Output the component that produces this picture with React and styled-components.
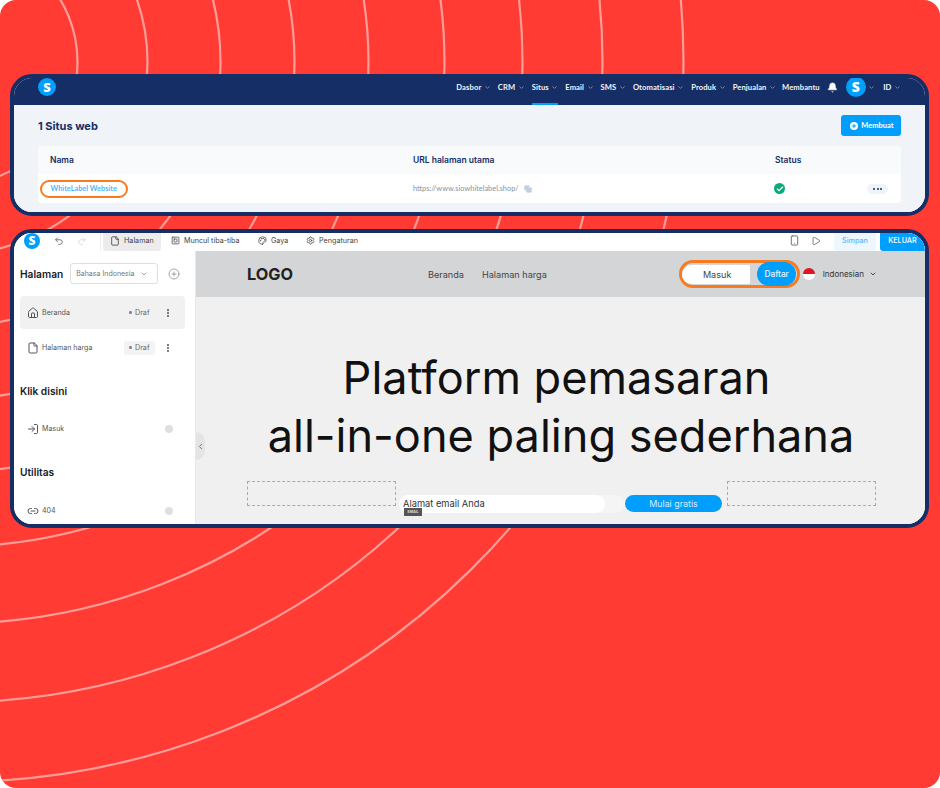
import React from 'react'
import styled, { createGlobalStyle } from 'styled-components'
import {
  Bell,
  Check,
  ChevronDown,
  ChevronLeft,
  CirclePlus,
  Copy,
  EllipsisVertical,
  File,
  House,
  Link2,
  LogIn,
  Palette,
  Play,
  Plus,
  Redo2,
  Settings,
  Smartphone,
  SquareSquare,
  Undo2,
} from 'lucide-react'

const navy = '#152e66'
const blue = '#009ffd'
const orange = '#f97a1f'

const GlobalStyle = createGlobalStyle`
  html, body {
    margin: 0;
    padding: 0;
    background: #fff;
  }
  * {
    box-sizing: border-box;
  }
  body {
    font-family: Inter, "Liberation Sans", sans-serif;
  }
`

const Page = styled.div`
  position: relative;
  width: 940px;
  height: 788px;
  padding: 74px 11px 0 10px;
  background: #ff3b33;
  border-radius: 16px;
  overflow: hidden;
  display: flex;
  flex-direction: column;
  gap: 13px;
`

const Waves = styled.svg`
  position: absolute;
  top: 0;
  left: 0;
`

const Card = styled.section`
  position: relative;
  height: ${({ $height }) => $height}px;
  flex: none;
  border: 4px solid ${navy};
  border-radius: 22px;
  overflow: hidden;
  background: #fff;
  display: flex;
  flex-direction: column;
`

/* top card: dashboard */
const TopBar = styled.header`
  height: 27px;
  flex: none;
  background: ${navy};
  display: flex;
  align-items: center;
  padding: 0 24px 9px 24px;
  font-family: Lato, sans-serif;
`

const Logo = styled.span`
  width: ${({ $size }) => $size}px;
  height: ${({ $size }) => $size}px;
  flex: none;
  border-radius: 50%;
  background: ${blue};
  color: #fff;
  font-family: "Open Sans", sans-serif;
  font-weight: 800;
  font-size: ${({ $size }) => Math.round($size * 0.72)}px;
  line-height: 1;
  display: flex;
  align-items: center;
  justify-content: center;
`

const MainNav = styled.nav`
  margin-left: auto;
  display: flex;
  align-items: center;
  height: 100%;
`

const NavItem = styled.span`
  position: relative;
  height: 100%;
  display: flex;
  align-items: center;
  margin-left: ${({ $gap }) => $gap ?? 0}px;
  color: #f2f5fa;
  font-size: 7.6px;
  font-weight: 700;
  letter-spacing: 0.1px;
  white-space: nowrap;
  svg {
    margin-left: 2.5px;
    opacity: 0.75;
  }
  ${({ $active }) =>
    $active &&
    `
    &::after {
      content: '';
      position: absolute;
      left: 0;
      right: 0;
      bottom: -9px;
      height: 2px;
      background: ${blue};
    }
  `}
`

const BellItem = styled(NavItem)`
  svg {
    margin-left: 0;
    opacity: 1;
  }
`

const Dash = styled.div`
  flex: 1;
  background: #f0f3f8;
  padding: 10px 24px 0;
`

const TitleRow = styled.div`
  display: flex;
  align-items: center;
  justify-content: space-between;
  height: 21px;
`

const Title = styled.h2`
  margin: 0;
  color: ${navy};
  font-size: 11px;
  font-weight: 700;
`

const CreateButton = styled.button`
  width: 60px;
  height: 21px;
  border: 0;
  border-radius: 3px;
  background: ${blue};
  color: #fff;
  font-family: Lato, sans-serif;
  font-size: 7.5px;
  font-weight: 700;
  padding: 0 0 0 2px;
  display: flex;
  align-items: center;
  justify-content: center;
  gap: 3px;
`

const PlusDot = styled.span`
  width: 8px;
  height: 8px;
  border-radius: 50%;
  background: #fff;
  color: ${blue};
  display: flex;
  align-items: center;
  justify-content: center;
`

const Table = styled.div`
  margin-top: 10px;
  border-radius: 4px;
  overflow: hidden;
`

const TableRow = styled.div`
  display: grid;
  grid-template-columns: 363px 362px 1fr;
  align-items: center;
  padding-left: 12px;
  height: ${({ $height }) => $height}px;
  background: ${({ $head }) => ($head ? '#f8fafc' : '#fff')};
`

const HeadCell = styled.span`
  color: ${navy};
  font-size: 8.5px;
  font-weight: 600;
`

const NameOutline = styled.span`
  justify-self: start;
  margin-left: -10.5px;
  width: 88px;
  height: 18px;
  border: 2.2px solid ${orange};
  border-radius: 9px;
  color: #45adff;
  font-family: Lato, sans-serif;
  font-size: 7.4px;
  font-weight: 600;
  display: flex;
  align-items: center;
  padding-left: 9px;
  white-space: nowrap;
`

const UrlCell = styled.span`
  color: #8b93a1;
  font-family: Lato, sans-serif;
  font-size: 7.4px;
  display: flex;
  align-items: center;
  gap: 5px;
  svg {
    color: #c4cedd;
  }
`

const StatusCell = styled.div`
  display: flex;
  align-items: center;
  justify-content: space-between;
  padding: 0 13px 0 0;
`

const StatusDot = styled.span`
  width: 11px;
  height: 11px;
  margin-left: -1px;
  border-radius: 50%;
  background: #11a67b;
  color: #fff;
  display: flex;
  align-items: center;
  justify-content: center;
`

const MoreButton = styled.span`
  width: 21px;
  height: 10px;
  border-radius: 5px;
  background: #f0f3f8;
  display: flex;
  align-items: center;
  justify-content: center;
  gap: 1.5px;
  i {
    width: 2px;
    height: 2px;
    border-radius: 50%;
    background: ${navy};
  }
`

/* bottom card: page builder */
const Toolbar = styled.header`
  height: 18px;
  flex: none;
  display: flex;
  align-items: center;
  padding-left: 10px;
  color: #444;
  font-size: 7.2px;
  background: #fff;
`

const ToolLogo = styled(Logo)`
  margin-top: -3px;
`

const ToolIcon = styled.span`
  display: flex;
  margin-top: -3px;
  margin-left: ${({ $gap }) => $gap ?? 0}px;
  color: ${({ $muted }) => ($muted ? '#d6d6d6' : '#666')};
`

const ToolDivider = styled.span`
  width: 1px;
  height: 100%;
  margin: 0 2px 0 13px;
  background: #eee;
`

const ToolTab = styled.span`
  height: 100%;
  width: ${({ $width }) => $width}px;
  padding: 0 0 3px ${({ $pad }) => $pad ?? 0}px;
  border-radius: 0 0 3px 3px;
  background: ${({ $active }) => ($active ? '#ececec' : 'transparent')};
  display: flex;
  align-items: center;
  gap: 4px;
  white-space: nowrap;
`

const ToolRight = styled.div`
  margin-left: auto;
  height: 100%;
  display: flex;
  align-items: center;
`

const SaveButton = styled.span`
  width: 42px;
  height: 100%;
  margin: 0 4px 0 13px;
  padding-bottom: 3px;
  border-radius: 0 0 3px 3px;
  background: #eef6fe;
  color: #58b6fc;
  font-weight: 500;
  display: flex;
  align-items: center;
  justify-content: center;
`

const ExitButton = styled.span`
  width: 45px;
  height: 100%;
  padding-bottom: 3px;
  border-radius: 0 0 0 3px;
  background: ${blue};
  color: #e9f6ff;
  font-weight: 600;
  display: flex;
  align-items: center;
  justify-content: center;
`

const Workspace = styled.div`
  flex: 1;
  min-height: 0;
  display: flex;
`

const Sidebar = styled.aside`
  width: 182px;
  flex: none;
  padding: 12px 0 0 6px;
  background: #fff;
  border-right: 1px solid #e9e9e9;
`

const SideHead = styled.div`
  display: flex;
  align-items: center;
  height: 21px;
`

const SideTitle = styled.h3`
  margin: ${({ $top }) => $top ?? 0}px 0 0;
  color: #1b1b1f;
  font-size: 10.2px;
  font-weight: 600;
  line-height: 14px;
`

const LangSelect = styled.div`
  width: 88px;
  height: 21px;
  margin-left: 7px;
  padding: 0 9px 0 5px;
  border: 1px solid #dedede;
  border-radius: 3px;
  color: #777;
  font-size: 7px;
  display: flex;
  align-items: center;
  justify-content: space-between;
  white-space: nowrap;
`

const AddPage = styled.span`
  display: flex;
  margin-left: 10px;
  color: #777;
`

const PageRow = styled.div`
  width: 165px;
  height: ${({ $height }) => $height ?? 33}px;
  margin-top: ${({ $top }) => $top ?? 0}px;
  padding: 0 12px 0 7px;
  border-radius: 4px;
  background: ${({ $active }) => ($active ? '#f1f1f1' : 'transparent')};
  color: #555;
  font-size: 7.1px;
  display: flex;
  align-items: center;
  svg {
    flex: none;
    color: #555;
  }
`

const PageName = styled.span`
  margin-left: 3px;
  margin-right: auto;
`

const DraftChip = styled.span`
  width: 31px;
  height: 14px;
  margin-right: 8px;
  border-radius: 3px;
  background: ${({ $filled }) => ($filled ? '#f3f3f3' : 'transparent')};
  color: #666;
  font-size: 7.2px;
  display: flex;
  align-items: center;
  justify-content: center;
  gap: 3px;
  &::before {
    content: '';
    width: 2.5px;
    height: 2.5px;
    border-radius: 50%;
    background: #888;
  }
`

const HelpDot = styled.span`
  width: 8px;
  height: 8px;
  border-radius: 50%;
  background: #dfdfdf;
`

const Preview = styled.main`
  position: relative;
  flex: 1;
  min-width: 0;
  background: #f0f0f0;
  overflow: hidden;
`

const CollapseTab = styled.span`
  position: absolute;
  top: 181px;
  left: 0;
  width: 9px;
  height: 28px;
  border-radius: 0 9px 9px 0;
  background: #e4e4e4;
  color: #555;
  display: flex;
  align-items: center;
`

const SiteHeader = styled.header`
  height: 46px;
  padding: 0 48px 0 51px;
  background: #d4d5d7;
  display: flex;
  align-items: center;
`

const SiteLogo = styled.span`
  width: 181px;
  color: #222;
  font-size: 16.3px;
  font-weight: 700;
`

const SiteLinks = styled.nav`
  display: flex;
  gap: 18px;
  color: #444;
  font-size: 9.15px;
`

const AuthGroup = styled.div`
  position: relative;
  margin-left: auto;
  width: 121px;
  height: 28px;
  padding: 1.5px 2.5px;
  border: 3px solid ${orange};
  border-radius: 14px;
  display: flex;
  align-items: center;
  justify-content: space-between;
`

const LoginButton = styled.span`
  width: 68px;
  height: 100%;
  margin: 0 0 0 -2px;
  border-radius: 11px 2px 2px 11px;
  background: #fff;
  color: #444;
  font-size: 9.1px;
  padding-left: 2px;
  display: flex;
  align-items: center;
  justify-content: center;
`

const SignupButton = styled.span`
  width: 39px;
  height: 24px;
  margin-right: -2px;
  border-radius: 12px;
  background: ${blue};
  color: #e6f5ff;
  font-size: 8.3px;
  font-weight: 500;
  display: flex;
  align-items: center;
  justify-content: center;
`

const Flag = styled.span`
  width: 12px;
  height: 12px;
  margin: 0 8px 0 3px;
  border-radius: 50%;
  background: linear-gradient(#e2141f 50%, #fff 50%);
`

const LangLabel = styled.span`
  color: #333;
  font-size: 8px;
  display: flex;
  align-items: center;
  gap: 5px;
`

const Hero = styled.h1`
  margin: 0;
  padding: 52px 0 0 1px;
  color: #111;
  font-size: 45.1px;
  font-weight: 400;
  line-height: 58px;
  text-align: center;
  white-space: nowrap;
`

const HeroLead = styled.span`
  display: inline-block;
  padding-right: 9px;
`

const SignupForm = styled.div`
  margin-top: 16px;
  padding-left: 51px;
  display: flex;
  align-items: flex-start;
`

const Placeholder = styled.div`
  width: 149px;
  height: 25px;
  border: 1px dashed #aaa;
`

const EmailWrap = styled.div`
  position: relative;
  width: 206px;
  height: 18px;
  margin: 14px 0 0 3px;
  padding-left: 4px;
  border-radius: 9px;
  background: #fff;
  box-shadow: 20px 0 0 #f5f5f5;
  color: #333;
  font-size: 9.3px;
  line-height: 17px;
`

const FieldTag = styled.span`
  position: absolute;
  top: 13px;
  left: 5px;
  width: 18px;
  height: 8px;
  background: #555;
  color: #ddd;
  font-size: 3.5px;
  font-weight: 700;
  line-height: 8px;
  text-align: center;
`

const StartButton = styled.div`
  width: 97px;
  height: 17px;
  margin: 14px 5px 0 20px;
  border-radius: 9px;
  background: ${blue};
  color: #d6efff;
  font-size: 8.9px;
  line-height: 17px;
  text-align: center;
`

const radii = [125, 195, 268, 342, 416, 492, 570, 650, 731]

const navItems = ['Dasbor', 'CRM', 'Situs', 'Email', 'SMS', 'Otomatisasi', 'Produk', 'Penjualan']

export default function App() {
  return (
    <>
      <GlobalStyle />
      <Page>
        <Waves width="940" height="788" aria-hidden="true">
          {radii.map((r) => (
            <ellipse
              key={r}
              cx="-47.5"
              cy="62"
              rx={r}
              ry={r * 0.985}
              fill="none"
              stroke="#ffffff"
              strokeOpacity="0.5"
              strokeWidth="2.2"
            />
          ))}
        </Waves>

        <Card $height={142}>
          <TopBar>
            <Logo $size={18}>S</Logo>
            <MainNav>
              {navItems.map((label, i) => (
                <NavItem key={label} $gap={i === 0 ? 0 : 7} $active={label === 'Situs'}>
                  {label}
                  <ChevronDown size={7} strokeWidth={2} />
                </NavItem>
              ))}
              <NavItem $gap={6}>Membantu</NavItem>
              <BellItem $gap={7}>
                <Bell size={11} fill="#fff" strokeWidth={1.5} />
              </BellItem>
              <NavItem $gap={8}>
                <Logo $size={20}>S</Logo>
                <ChevronDown size={7} strokeWidth={2} />
              </NavItem>
              <NavItem $gap={8}>
                ID
                <ChevronDown size={7} strokeWidth={2} />
              </NavItem>
            </MainNav>
          </TopBar>
          <Dash>
            <TitleRow>
              <Title>1 Situs web</Title>
              <CreateButton>
                <PlusDot>
                  <Plus size={6} strokeWidth={4} />
                </PlusDot>
                Membuat
              </CreateButton>
            </TitleRow>
            <Table>
              <TableRow $head $height={28}>
                <HeadCell>Nama</HeadCell>
                <HeadCell>URL halaman utama</HeadCell>
                <HeadCell>Status</HeadCell>
              </TableRow>
              <TableRow $height={29}>
                <NameOutline>WhiteLabel Website</NameOutline>
                <UrlCell>
                  https://www.siowhitelabel.shop/
                  <Copy size={8} fill="#c4cedd" />
                </UrlCell>
                <StatusCell>
                  <StatusDot>
                    <Check size={8} strokeWidth={3.5} />
                  </StatusDot>
                  <MoreButton>
                    <i />
                    <i />
                    <i />
                  </MoreButton>
                </StatusCell>
              </TableRow>
            </Table>
          </Dash>
        </Card>

        <Card $height={299}>
          <Toolbar>
            <ToolLogo $size={16}>S</ToolLogo>
            <ToolIcon $gap={14}>
              <Undo2 size={10} />
            </ToolIcon>
            <ToolIcon $gap={13} $muted>
              <Redo2 size={10} />
            </ToolIcon>
            <ToolDivider />
            <ToolTab $active $width={58} $pad={7}>
              <File size={10} />
              Halaman
            </ToolTab>
            <ToolTab $width={97} $pad={10}>
              <SquareSquare size={9} />
              Muncul tiba-tiba
            </ToolTab>
            <ToolTab $width={48}>
              <Palette size={9} />
              Gaya
            </ToolTab>
            <ToolTab $width={70}>
              <Settings size={9} />
              Pengaturan
            </ToolTab>
            <ToolRight>
              <ToolIcon>
                <Smartphone size={11} />
              </ToolIcon>
              <ToolIcon $gap={11}>
                <Play size={10} />
              </ToolIcon>
              <SaveButton>Simpan</SaveButton>
              <ExitButton>KELUAR</ExitButton>
            </ToolRight>
          </Toolbar>
          <Workspace>
            <Sidebar>
              <SideHead>
                <SideTitle>Halaman</SideTitle>
                <LangSelect>
                  Bahasa Indonesia
                  <ChevronDown size={8} />
                </LangSelect>
                <AddPage>
                  <CirclePlus size={12} strokeWidth={1.3} />
                </AddPage>
              </SideHead>
              <PageRow $active $top={12}>
                <House size={12} />
                <PageName>Beranda</PageName>
                <DraftChip>Draf</DraftChip>
                <EllipsisVertical size={10} strokeWidth={3} />
              </PageRow>
              <PageRow $top={2}>
                <File size={12} />
                <PageName>Halaman harga</PageName>
                <DraftChip $filled>Draf</DraftChip>
                <EllipsisVertical size={10} strokeWidth={3} />
              </PageRow>
              <SideTitle $top={20}>Klik disini</SideTitle>
              <PageRow $top={14}>
                <LogIn size={12} />
                <PageName>Masuk</PageName>
                <HelpDot />
              </PageRow>
              <SideTitle $top={20}>Utilitas</SideTitle>
              <PageRow $top={15}>
                <Link2 size={12} />
                <PageName>404</PageName>
                <HelpDot />
              </PageRow>
            </Sidebar>
            <Preview>
              <CollapseTab>
                <ChevronLeft size={9} />
              </CollapseTab>
              <SiteHeader>
                <SiteLogo>LOGO</SiteLogo>
                <SiteLinks>
                  <span>Beranda</span>
                  <span>Halaman harga</span>
                </SiteLinks>
                <AuthGroup>
                  <LoginButton>Masuk</LoginButton>
                  <SignupButton>Daftar</SignupButton>
                </AuthGroup>
                <Flag />
                <LangLabel>
                  Indonesian
                  <ChevronDown size={8} strokeWidth={2.5} />
                </LangLabel>
              </SiteHeader>
              <Hero>
                <HeroLead>Platform pemasaran</HeroLead>
                <br />
                all-in-one paling sederhana
              </Hero>
              <SignupForm>
                <Placeholder />
                <EmailWrap>
                  Alamat email Anda
                  <FieldTag>EMAIL</FieldTag>
                </EmailWrap>
                <StartButton>Mulai gratis</StartButton>
                <Placeholder />
              </SignupForm>
            </Preview>
          </Workspace>
        </Card>
      </Page>
    </>
  )
}
